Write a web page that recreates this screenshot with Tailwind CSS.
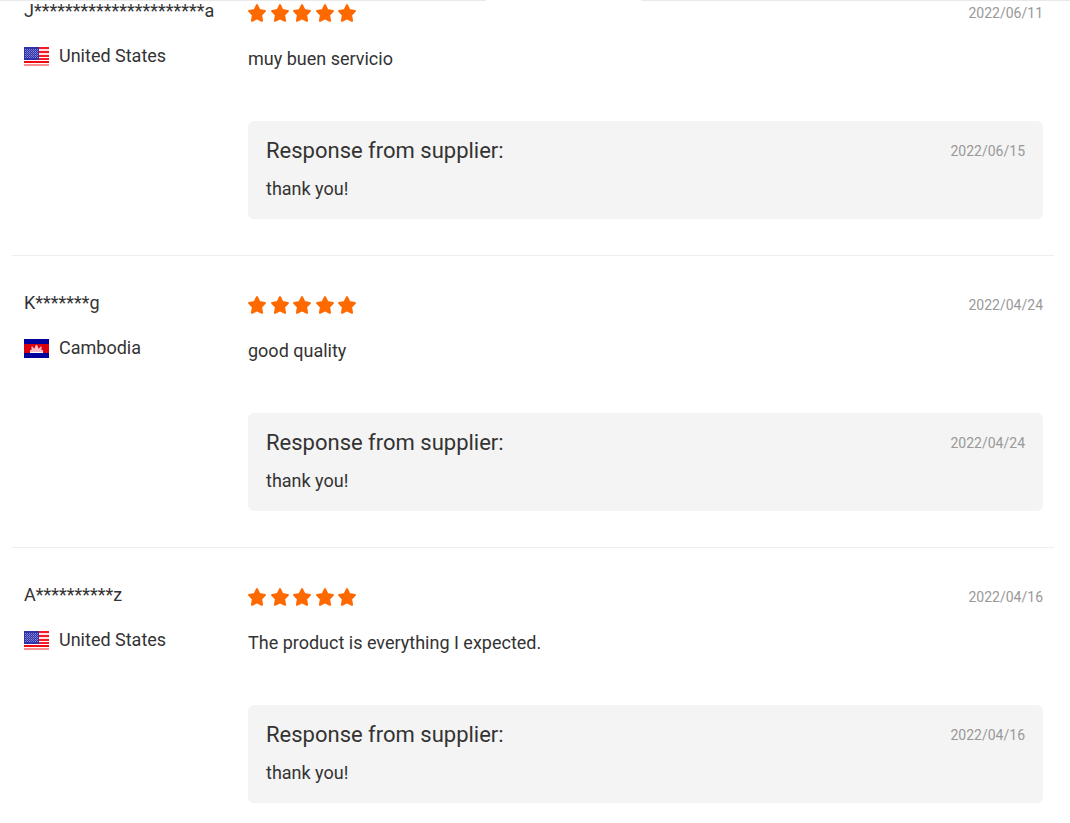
<!DOCTYPE html>
<html lang="en">
<head>
    <meta charset="UTF-8">
    <meta name="viewport" content="width=device-width, initial-scale=1.0">
    <title>Supplier Reviews</title>
    <script src="https://cdn.jsdelivr.net/npm/@tailwindcss/browser@4"></script>
</head>
<body class="bg-white font-[Roboto,sans-serif] text-lg leading-6 text-[#333] overflow-x-hidden">
    <!-- Shared icons -->
    <svg class="hidden" aria-hidden="true">
        <symbol id="star" viewBox="0.8 0.6 18.4 18.4">
            <path d="M10 1.8 L12.5 6.9 L18 7.8 L14.1 11.9 L15.1 17.7 L10 15.1 L4.9 17.7 L5.900 11.9 L2 7.8 L7.5 6.900 Z" fill="#ff6a00" stroke="#ff6a00" stroke-width="2.200" stroke-linejoin="round"/>
        </symbol>
        <symbol id="flag-us" viewBox="0 0 25 19">
            <rect width="25" height="19" fill="#fff"/>
            <path d="M0 1h25M0 5h25M0 9h25M0 12h25" stroke="#f21c28" stroke-width="2"/>
            <path d="M0 15h25" stroke="#f00812" stroke-width="2"/>
            <path d="M0 18h25" stroke="#fb8f92" stroke-width="2"/>
            <path d="M15 3h10M15 7h10" stroke="#fbc4c6" stroke-width="1"/>
            <rect width="15" height="13" fill="#3030a8"/>
            <path d="M1 2.500h13M1 4.500h13M1 6.500h13M1 8.500h13M1 10.500h13" stroke="#888cd6" stroke-width="1" stroke-dasharray="1 1"/>
            <path d="M2 3.500h12M2 5.500h12M2 7.500h12M2 9.500h12" stroke="#6a6ec8" stroke-width="1" stroke-dasharray="1 1"/>
        </symbol>
        <symbol id="flag-kh" viewBox="0 0 25 19">
            <rect width="25" height="19" fill="#00009c"/>
            <rect y="5" width="25" height="9" fill="#d9000d"/>
            <path d="M6 14v-3h1.500V7.500h1L9.500 9l1 .5 1-3h.5l.5-1 .5 1h.5l1 3 1-.5 1-1.500h1V11H19v3z" fill="#f9bcc6"/>
            <path d="M6 13.500h13" stroke="#fff" stroke-width="1"/>
        </symbol>
    </svg>

    <!-- Bottom edge of the tab bar -->
    <div class="flex justify-between">
        <div class="h-px w-[486px] bg-[#e9e9e9]"></div>
        <div class="h-px w-[429px] bg-[#e9e9e9]"></div>
    </div>

    <main class="-mt-[37px] ml-3 mr-4">
        <article class="flex border-b border-[#eee] pt-[35px] pb-9 pl-3 pr-[11px]">
            <div class="w-56 shrink-0">
                <p class="mb-[21px]">J**********************a</p>
                <p class="flex items-center gap-2.5">
                    <svg class="w-[25px] h-[19px]" role="img" aria-label="US flag"><use href="#flag-us"/></svg>
                    United States
                </p>
            </div>
            <div class="grow">
                <div class="flex items-center justify-between h-7">
                    <div class="flex justify-between w-[108px]" role="img" aria-label="5 stars">
                        <svg class="size-[18px]"><use href="#star"/></svg>
                        <svg class="size-[18px]"><use href="#star"/></svg>
                        <svg class="size-[18px]"><use href="#star"/></svg>
                        <svg class="size-[18px]"><use href="#star"/></svg>
                        <svg class="size-[18px]"><use href="#star"/></svg>
                    </div>
                    <time class="text-sm text-[#999]">2022/06/11</time>
                </div>
                <p class="mt-5">muy buen servicio</p>
                <div class="mt-[50px] rounded-md bg-[#f4f4f4] px-[18px] pt-4 pb-[18px]">
                    <div class="flex items-center justify-between">
                        <h3 class="text-[22px] leading-7">Response from supplier:</h3>
                        <time class="text-sm text-[#999]">2022/06/15</time>
                    </div>
                    <p class="mt-3">thank you!</p>
                </div>
            </div>
        </article>

        <article class="flex border-b border-[#eee] pt-[35px] pb-9 pl-3 pr-[11px]">
            <div class="w-56 shrink-0">
                <p class="mb-[21px]">K*******g</p>
                <p class="flex items-center gap-2.5">
                    <svg class="w-[25px] h-[19px]" role="img" aria-label="Cambodia flag"><use href="#flag-kh"/></svg>
                    Cambodia
                </p>
            </div>
            <div class="grow">
                <div class="flex items-center justify-between h-7">
                    <div class="flex justify-between w-[108px]" role="img" aria-label="5 stars">
                        <svg class="size-[18px]"><use href="#star"/></svg>
                        <svg class="size-[18px]"><use href="#star"/></svg>
                        <svg class="size-[18px]"><use href="#star"/></svg>
                        <svg class="size-[18px]"><use href="#star"/></svg>
                        <svg class="size-[18px]"><use href="#star"/></svg>
                    </div>
                    <time class="text-sm text-[#999]">2022/04/24</time>
                </div>
                <p class="mt-5">good quality</p>
                <div class="mt-[50px] rounded-md bg-[#f4f4f4] px-[18px] pt-4 pb-[18px]">
                    <div class="flex items-center justify-between">
                        <h3 class="text-[22px] leading-7">Response from supplier:</h3>
                        <time class="text-sm text-[#999]">2022/04/24</time>
                    </div>
                    <p class="mt-3">thank you!</p>
                </div>
            </div>
        </article>

        <article class="flex pt-[35px] pl-3 pr-[11px]">
            <div class="w-56 shrink-0">
                <p class="mb-[21px]">A**********z</p>
                <p class="flex items-center gap-2.5">
                    <svg class="w-[25px] h-[19px]" role="img" aria-label="US flag"><use href="#flag-us"/></svg>
                    United States
                </p>
            </div>
            <div class="grow">
                <div class="flex items-center justify-between h-7">
                    <div class="flex justify-between w-[108px]" role="img" aria-label="5 stars">
                        <svg class="size-[18px]"><use href="#star"/></svg>
                        <svg class="size-[18px]"><use href="#star"/></svg>
                        <svg class="size-[18px]"><use href="#star"/></svg>
                        <svg class="size-[18px]"><use href="#star"/></svg>
                        <svg class="size-[18px]"><use href="#star"/></svg>
                    </div>
                    <time class="text-sm text-[#999]">2022/04/16</time>
                </div>
                <p class="mt-5">The product is everything I expected.</p>
                <div class="mt-[50px] rounded-md bg-[#f4f4f4] px-[18px] pt-4 pb-[18px]">
                    <div class="flex items-center justify-between">
                        <h3 class="text-[22px] leading-7">Response from supplier:</h3>
                        <time class="text-sm text-[#999]">2022/04/16</time>
                    </div>
                    <p class="mt-3">thank you!</p>
                </div>
            </div>
        </article>
    </main>
</body>
</html>
